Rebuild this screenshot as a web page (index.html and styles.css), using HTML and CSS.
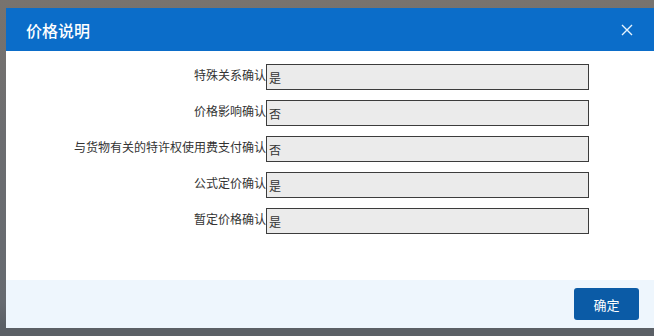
FILE: index.html
```html
<!DOCTYPE html>
<html lang="zh-CN">
<head>
    <meta charset="UTF-8">
    <meta name="viewport" content="width=device-width, initial-scale=1.0">
    <title>价格说明</title>
    <link rel="stylesheet" href="styles.css">
</head>
<body>
    <div class="dialog">
        <div class="dialog-header">
            <h1>价格说明</h1>
            <span class="close">
                <svg width="12" height="12" viewBox="0 0 12 12">
                    <path d="M1 1 L11 11 M11 1 L1 11" stroke="#e6f4ff" stroke-width="1.4" fill="none"/>
                </svg>
            </span>
        </div>

        <div class="dialog-body">
            <div class="row">
                <label>特殊关系确认</label>
                <div class="value">是</div>
            </div>
            <div class="row">
                <label>价格影响确认</label>
                <div class="value">否</div>
            </div>
            <div class="row">
                <label>与货物有关的特许权使用费支付确认</label>
                <div class="value">否</div>
            </div>
            <div class="row">
                <label>公式定价确认</label>
                <div class="value">是</div>
            </div>
            <div class="row">
                <label>暂定价格确认</label>
                <div class="value">是</div>
            </div>
        </div>

        <div class="dialog-footer">
            <button class="btn-ok">确定</button>
        </div>
    </div>
</body>
</html>
```

FILE: styles.css
```css
html, body {
    margin: 0;
    height: 336px;
    overflow: hidden;
}

body {
    font-family: "Noto Sans CJK SC", "Liberation Sans", sans-serif;
    background: linear-gradient(to bottom, #78736e 0, #6c6d70 40%, #666a70 90%, #5b6066 97%);
    padding: 8px 0 0 6px;
    box-sizing: border-box;
    color: #333;
}

.dialog {
    width: 648px;
    background: #fff;
}

.dialog-header {
    height: 43px;
    background: #0b6dc9;
    display: flex;
    align-items: center;
    justify-content: space-between;
    padding: 0 21px 0 20px;
}

.dialog-header h1 {
    margin: 0;
    font-size: 16px;
    font-weight: 500;
    color: #fff;
}

.close {
    display: flex;
    margin-top: 1px;
}

.dialog-body {
    height: 229px;
    padding-top: 13px;
    box-sizing: border-box;
    display: flex;
    flex-direction: column;
    gap: 10px;
}

.row {
    display: flex;
    align-items: flex-start;
}

.row label {
    width: 260px;
    text-align: right;
    font-size: 12px;
    line-height: 22px;
    color: #333;
}

.value {
    box-sizing: border-box;
    width: 323px;
    height: 26px;
    border: 1px solid #3c3c3c;
    background: #ebebeb;
    font-size: 12px;
    line-height: 26px;
    padding-left: 2px;
    color: #333;
}

.dialog-footer {
    height: 48px;
    background: #eef6fd;
    display: flex;
    align-items: center;
    justify-content: flex-end;
    padding-right: 15px;
}

.btn-ok {
    width: 65px;
    height: 32px;
    border: none;
    border-radius: 3px;
    background: #0b5ba6;
    color: #fff;
    font-family: inherit;
    font-size: 13px;
    cursor: pointer;
}
```
